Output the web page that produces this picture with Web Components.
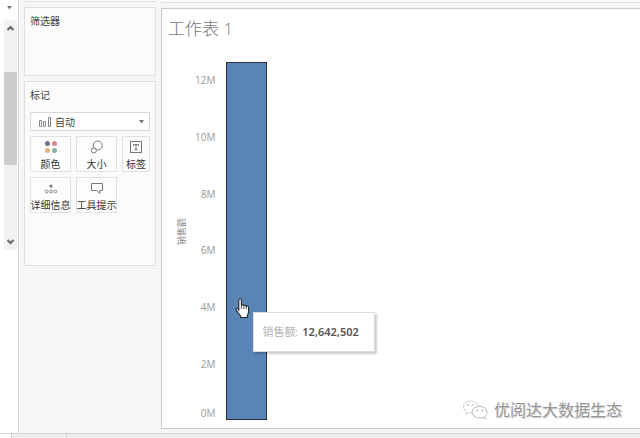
<!DOCTYPE html>
<html lang="zh-CN">
<head>
<meta charset="utf-8">
<meta name="viewport" content="width=device-width, initial-scale=1">
<title>工作表 1</title>
<style>
  html, body { height: 100%; }
  body {
    margin: 0;
    overflow: hidden;
    background: #f6f6f6;
    font-family: "Open Sans", "Noto Sans CJK SC", sans-serif;
    font-size: 10px;
    color: #444;
  }
</style>
</head>
<body>
<work-book>
  <side-scroller slot="side"></side-scroller>
  <shelf-card slot="shelves" heading="筛选器" class="filters"></shelf-card>
  <shelf-card slot="shelves" heading="标记" class="marks">
    <mark-type></mark-type>
    <mark-grid>
      <mark-button label="颜色">
        <svg width="14" height="14" viewBox="0 0 14 14">
          <circle cx="3.5" cy="3.5" r="2.5" fill="#75708a"/><circle cx="10.5" cy="3.5" r="2.5" fill="#dc8585"/>
          <circle cx="3.5" cy="10.5" r="2.5" fill="#e5b085"/><circle cx="10.5" cy="10.5" r="2.5" fill="#86b3a2"/>
        </svg>
      </mark-button>
      <mark-button label="大小">
        <svg width="14" height="14" viewBox="0 0 14 14" fill="none" stroke="#777">
          <path d="M4 8A4.500 4.500 0 1 1 6.500 9.800"/><circle cx="3.800" cy="10.500" r="2.500"/>
        </svg>
      </mark-button>
      <mark-button label="标签">
        <svg width="14" height="14" viewBox="0 0 14 14" fill="none" stroke="#777">
          <rect x="1.5" y="1.5" width="11" height="11"/>
          <path d="M4.5 6V4.5h5V6M7 4.5v5M5.5 9.8h3"/>
        </svg>
      </mark-button>
      <mark-button label="详细信息">
        <svg width="14" height="14" viewBox="0 0 14 14" fill="none" stroke="#888">
          <circle cx="7" cy="5" r="1.6" fill="#777" stroke="none"/>
          <circle cx="2.6" cy="10.5" r="1.4"/><circle cx="7" cy="10.5" r="1.4"/><circle cx="11.4" cy="10.5" r="1.4"/>
        </svg>
      </mark-button>
      <mark-button label="工具提示">
        <svg width="14" height="14" viewBox="0 0 14 14" fill="none" stroke="#777">
          <path d="M1.5 2.5h11v7H9.8v3L6.8 9.5H1.5z"/>
        </svg>
      </mark-button>
    </mark-grid>
  </shelf-card>
  <sheet-view slot="sheet" heading="工作表 1">
    <bar-chart axis="销售额" ticks="12M,10M,8M,6M,4M,2M,0M">
      <mark-tooltip label="销售额:" value="12,642,502"></mark-tooltip>
    </bar-chart>
    <account-mark slot="overlay">优阅达大数据生态</account-mark>
  </sheet-view>
</work-book>

<script>
// Base class: opens the shadow root and fills it from render()
class BaseElement extends HTMLElement {
  connectedCallback() {
    if (this.shadowRoot) return;
    this.attachShadow({ mode: 'open' });
    this.shadowRoot.innerHTML = this.render();
  }

  attr(name) {
    return this.getAttribute(name) || '';
  }
}

class WorkBook extends BaseElement {
  render() {
    return `
      <style>
        :host { display: flex; flex-direction: column; height: 100vh; }
        .main { display: flex; flex: 1; min-height: 0; }
        .side { flex: 0 0 18px; background: #fff; border-right: 1px solid #d6d6d6; }
        .shelves {
          flex: 0 0 132px;
          display: flex;
          flex-direction: column;
          gap: 5px;
          padding: 0 5px;
        }
        .previous { height: 2px; background: #fbfbfb; border: 1px solid #e0e0e0; border-top: 0; box-sizing: border-box; }
        .content { flex: 1; min-width: 0; display: flex; flex-direction: column; gap: 5px; padding-bottom: 4px; }
        .shelf { flex: 0 0 2px; border-bottom: 1px solid #e0e0e0; background: #fafafa; }
        .tabs { display: flex; height: 4px; border-top: 1px solid #d4d4d4; background: #ededed; }
        .tabs span { border-right: 1px solid #d0d0d0; }
        .tabs .source { width: 11px; background: #fff; }
        .tabs .sheet { width: 54px; }
      </style>
      <div class="main">
        <div class="side"><slot name="side"></slot></div>
        <div class="shelves"><div class="previous"></div><slot name="shelves"></slot></div>
        <div class="content"><div class="shelf"></div><slot name="sheet"></slot></div>
      </div>
      <div class="tabs"><span class="source"></span><span class="sheet"></span></div>
    `;
  }
}

class SideScroller extends BaseElement {
  render() {
    return `
      <style>
        :host { display: flex; flex-direction: column; align-items: flex-end; }
        .menu { height: 20px; width: 18px; display: flex; align-items: center; justify-content: center; }
        .menu svg { margin-bottom: 4px; }
        .bar { width: 13px; height: 230px; margin-right: 1px; display: flex; flex-direction: column; background: #f2f2f2; }
        .bar svg { margin: 4px 2px; flex: none; }
        .track { flex: 1; padding-top: 35px; }
        .thumb { height: 93px; background: #cdcdcd; }
      </style>
      <div class="menu"><svg width="7" height="4"><path d="M1 0h5L3.5 3.5z" fill="#777"/></svg></div>
      <div class="bar">
        <svg width="9" height="9" fill="none" stroke="#666" stroke-width="2"><path d="M1.5 6l3-3 3 3"/></svg>
        <div class="track"><div class="thumb"></div></div>
        <svg width="9" height="9" fill="none" stroke="#666" stroke-width="2"><path d="M1.5 3l3 3 3-3"/></svg>
      </div>
    `;
  }
}

class ShelfCard extends BaseElement {
  render() {
    return `
      <style>
        :host {
          display: block;
          box-sizing: border-box;
          padding: 5px;
          border: 1px solid #dedede;
          background: #fbfbfb;
        }
        :host(.filters) { min-height: 69px; }
        :host(.marks) { min-height: 185px; }
        h2 { margin: 0 0 9px; font-size: 10px; line-height: 16px; font-weight: 400; }
      </style>
      <h2>${this.attr('heading')}</h2>
      <slot></slot>
    `;
  }
}

class MarkType extends BaseElement {
  render() {
    return `
      <style>
        :host { display: block; }
        .box {
          display: flex;
          align-items: center;
          gap: 4px;
          height: 17px;
          padding: 0 4px 0 7px;
          border: 1px solid #d8d8d8;
          background: #fff;
        }
        select {
          flex: 1;
          min-width: 0;
          appearance: none;
          border: 0;
          padding: 0;
          background: none;
          font: inherit;
          line-height: 16px;
          color: #444;
        }
        svg { flex: none; }
      </style>
      <div class="box">
        <svg width="13" height="11" fill="none" stroke="#888">
          <path d="M1.5 4.5h2v6h-2zM5.500 5.500h2v5h-2zM10.500 1.500h2v9h-2z"/>
        </svg>
        <select aria-label="标记类型"><option>自动</option></select>
        <svg width="7" height="4"><path d="M1 0h5L3.5 3.5z" fill="#777"/></svg>
      </div>
    `;
  }
}

class MarkGrid extends BaseElement {
  render() {
    return `
      <style>
        :host {
          display: grid;
          grid-template-columns: 41fr 41fr 28fr;
          grid-auto-rows: 36px;
          gap: 5px;
          margin-top: 5px;
        }
      </style>
      <slot></slot>
    `;
  }
}

class MarkButton extends BaseElement {
  render() {
    return `
      <style>
        :host { display: block; min-width: 0; }
        button {
          display: flex;
          flex-direction: column;
          align-items: center;
          justify-content: space-between;
          box-sizing: border-box;
          width: 100%;
          height: 100%;
          padding: 3px 0 0;
          border: 1px solid #e0e0e0;
          background: #fdfdfd;
          font: inherit;
          line-height: 14px;
          color: #333;
          white-space: nowrap;
        }
        ::slotted(svg) { display: block; }
      </style>
      <button type="button"><slot></slot><span>${this.attr('label')}</span></button>
    `;
  }
}

class SheetView extends BaseElement {
  render() {
    return `
      <style>
        :host {
          position: relative;
          flex: 1;
          min-height: 0;
          display: flex;
          flex-direction: column;
          padding: 7px 8px 8px 6px;
          border: 1px solid #c9c9c9;
          border-right: 0;
          background: #fff;
        }
        h1 { margin: 0 0 10px; font-size: 17px; line-height: 26px; font-weight: 300; color: #777; }
      </style>
      <h1>${this.attr('heading')}</h1>
      <slot></slot>
      <slot name="overlay"></slot>
    `;
  }
}

class BarChart extends BaseElement {
  render() {
    const ticks = this.attr('ticks').split(',').map(t => `<span>${t}</span>`).join('');
    return `
      <style>
        :host { display: flex; flex: 1; min-height: 0; }
        .title {
          flex: 0 0 27px;
          display: flex;
          align-items: center;
          justify-content: center;
          padding-bottom: 8px;
          font-size: 9px;
          color: #888;
        }
        .title span { writing-mode: vertical-rl; text-orientation: sideways; transform: rotate(180deg); }
        .ticks { flex: 0 0 20px; display: flex; flex-direction: column; font-size: 10px; line-height: 14px; color: #999; }
        .ticks span { flex: 1; display: flex; align-items: center; justify-content: flex-end; }
        .ticks span:last-child { flex: 0 0 28px; align-items: flex-end; }
        .bar {
          position: relative;
          flex: 0 0 41px;
          box-sizing: border-box;
          margin: 10px 0 0 11px;
          border: 1px solid #2b2f36;
          background: #5884b6;
        }
        /* pointer and tooltip float over the bar */
        .cursor { position: absolute; left: 8px; top: 66%; }
        ::slotted(mark-tooltip) { position: absolute; left: 26px; top: 70%; }
      </style>
      <div class="title"><span>${this.attr('axis')}</span></div>
      <div class="ticks">${ticks}</div>
      <div class="bar">
        <svg class="cursor" width="15" height="21" viewBox="0 0 14 20">
          <path d="M3.5 12.5V2a1.200 1.200 0 0 1 2.400 0v5.200c.2-1 2.200-1 2.400.3.3-.9 2.100-.8 2.300.5.4-.8 2.200-.6 2.200.8v4.200c0 1.700-1.300 2.500-1.300 5.500H5.500c0-2.200-2.700-4-4.600-7.200-.8-1.600.8-2.300 2.600-.1z" fill="#fff" stroke="#222"/>
          <path d="M5.900 7v3.500M8.300 7.500v3M10.600 8v2.500" stroke="#222" stroke-width=".7" fill="none"/>
        </svg>
        <slot></slot>
      </div>
    `;
  }
}

class MarkTooltip extends BaseElement {
  render() {
    return `
      <style>
        :host {
          display: flex;
          gap: 4px;
          padding: 10px 15px 10px 8px;
          border: 1px solid #ddd;
          background: #fff;
          box-shadow: 2px 2px 2px rgba(0, 0, 0, 0.2);
          line-height: 18px;
          white-space: nowrap;
        }
        .label { font-size: 11px; color: #b4b4b4; }
        .value { font-size: 11px; font-weight: 600; color: #555; font-family: "Noto Sans", sans-serif; }
      </style>
      <span class="label">${this.attr('label')}</span><span class="value">${this.attr('value')}</span>
    `;
  }
}

class AccountMark extends BaseElement {
  render() {
    return `
      <style>
        :host {
          position: absolute;
          right: 18px;
          bottom: 6px;
          display: flex;
          align-items: center;
          gap: 6px;
          font-size: 16px;
          line-height: 24px;
          color: #949494;
          text-shadow: -1px -1px 0 #fff, 1px 1px 1px #ccc;
        }
      </style>
      <svg width="26" height="20" viewBox="0 0 26 20" fill="none" stroke="#b4b4b4">
        <path d="M11 13c-1 .2-3 .1-4-.3L3.500 14.500l.8-2.800C-1 7.500 1.500 1.500 8 1c4-.2 7.200 2 8 5" stroke="#d4d4d4"/>
        <path d="M17.500 6.500c4.500 0 7.500 2.600 7.500 5.700 0 1.900-1 3.300-2.400 4.300l.6 2.300-2.500-1.400c-5.700 1.600-10.700-1.200-10.700-5.200 0-3.100 3-5.700 7.500-5.700z"/>
        <path d="M5 5h1.500M10.500 5H12M14.500 10.500H16M19.500 10.500H21" stroke="#888"/>
      </svg>
      <slot></slot>
    `;
  }
}

customElements.define('work-book', WorkBook);
customElements.define('side-scroller', SideScroller);
customElements.define('shelf-card', ShelfCard);
customElements.define('mark-type', MarkType);
customElements.define('mark-grid', MarkGrid);
customElements.define('mark-button', MarkButton);
customElements.define('sheet-view', SheetView);
customElements.define('bar-chart', BarChart);
customElements.define('mark-tooltip', MarkTooltip);
customElements.define('account-mark', AccountMark);
</script>
</body>
</html>
